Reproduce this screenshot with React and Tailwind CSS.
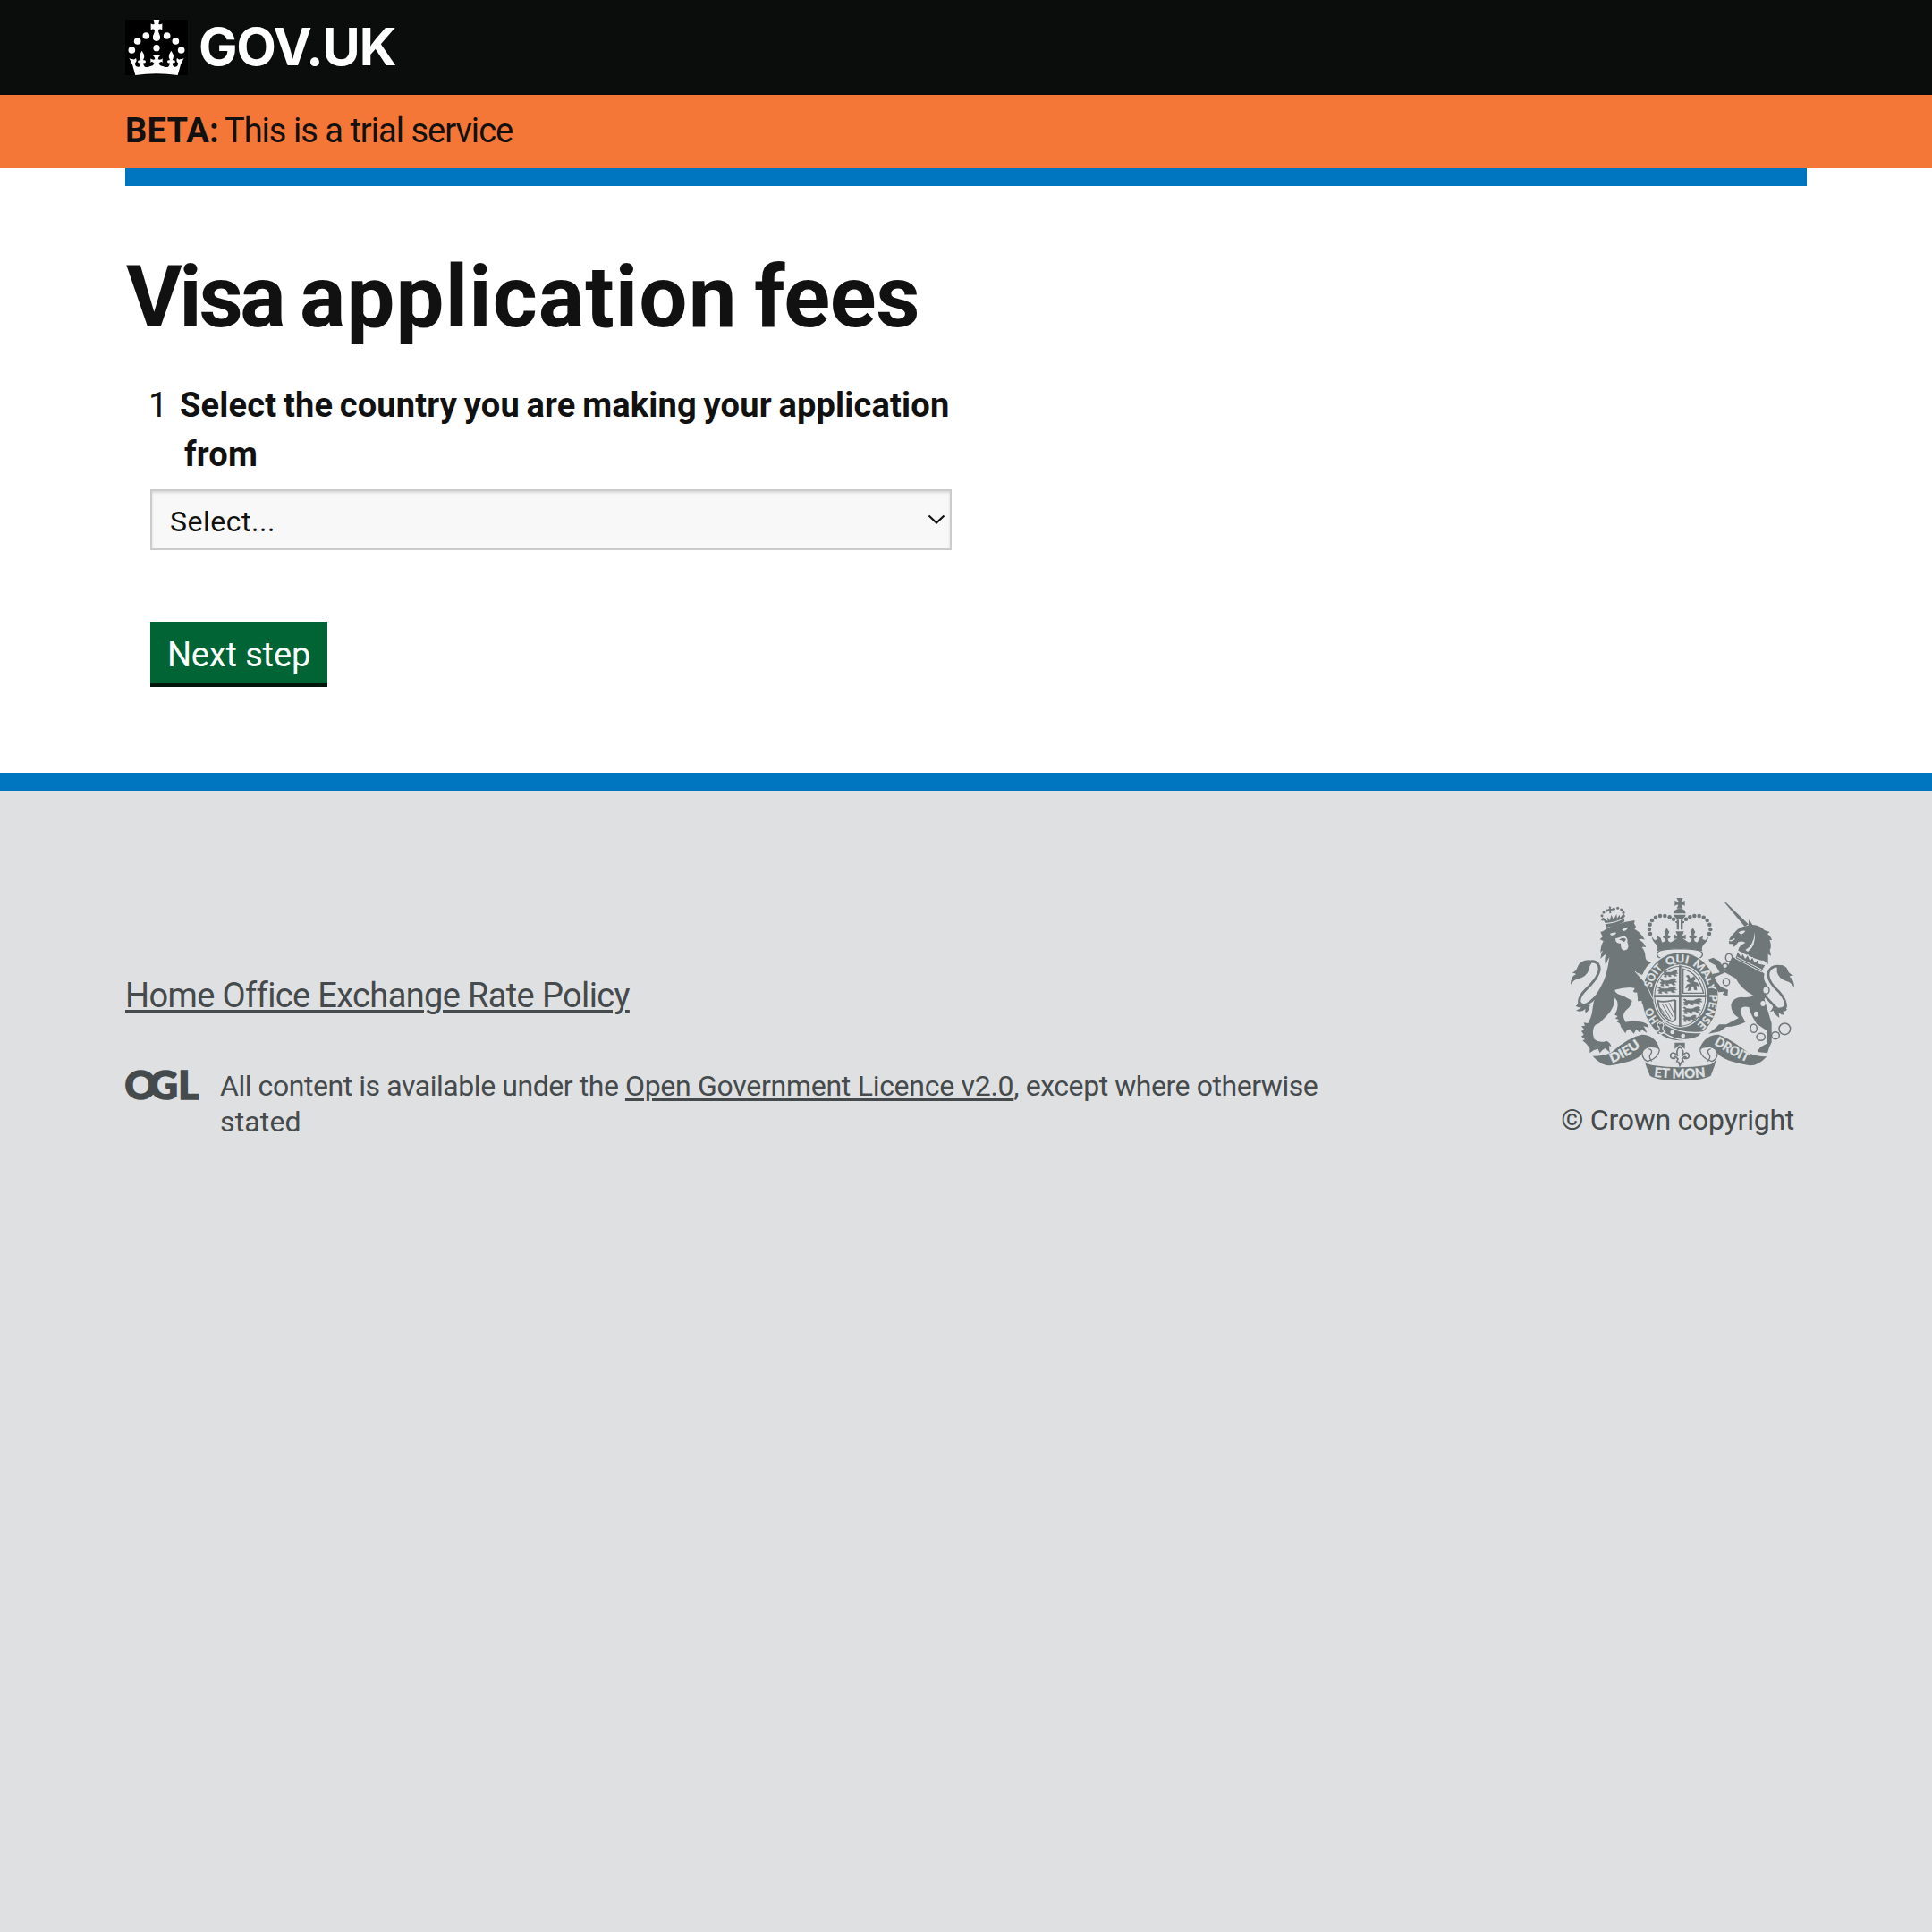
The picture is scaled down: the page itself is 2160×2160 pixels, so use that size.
function CrownLogo() {
  return (
    <svg className="block h-[62px] w-[70px] bg-black" viewBox="30 21 210 186" fill="#fff" aria-hidden="true">
      <path d="M125 21 H145 L142 36 Q150 38 154 34 V55 Q148 50 141 54 Q140 62 147 76 Q149 93 135 93 Q121 93 123 76 Q130 62 129 54 Q122 50 116 55 V34 Q120 38 128 36 Z" />
      <circle cx="135" cy="116" r="11" />
      <circle cx="100" cy="75" r="11.5" />
      <circle cx="170" cy="75" r="11.5" />
      <circle cx="71" cy="93" r="11.5" />
      <circle cx="199" cy="93" r="11.5" />
      <circle cx="52" cy="123" r="11.5" />
      <circle cx="218" cy="123" r="11.5" />
      <path d="M64 207 L54 172 L43 149 Q50 155 55 152 Q57 158 66 150 Q71 160 62 168 Q66 182 76 179 Q83 175 81 165 Q76 169 72 163 Q72 155 82 157 Q76 145 79 138 L86 125 L93 138 Q96 146 90 157 Q100 155 99 163 Q95 169 91 165 Q90 175 96 179 Q106 181 112 178 Q124 176 128 169 Q120 158 115 165 V151 Q120 157 130 154 Q130 147 121 139 H149 Q140 147 140 154 Q150 157 155 151 V165 Q150 158 142 169 Q146 176 158 178 Q166 181 174 179 Q180 175 179 165 Q175 169 171 163 Q170 155 180 157 Q174 146 177 138 L184 125 L191 138 Q194 145 188 157 Q198 155 198 163 Q194 169 189 165 Q187 175 194 179 Q204 182 208 168 Q199 160 204 150 Q213 158 215 152 Q220 155 227 149 L216 172 L206 207 Q135 197 64 207 Z" />
    </svg>
  );
}

function OglLogo() {
  return (
    <svg className="-mx-[2px] -mt-[12px] block h-[60px] w-[86px] shrink-0" viewBox="-2 -14 86 60" fill="#454a4c" role="img" aria-label="OGL">
      <text
        x="-0.6 27 59.3" y="33" fontFamily="Lato, sans-serif" fontWeight="900" fontSize="44"
        stroke="#454a4c" strokeWidth="1.6"
      >
        OGL
      </text>
    </svg>
  );
}

const INK = "#6f7779";
const PAPER = "#dee0e2";

const crownPearls = [
  [345, 162], [342, 147], [344, 131], [351, 117], [363, 107], [378, 102], [394, 102], [410, 106], [423, 113],
  [543, 162], [547, 147], [544, 131], [536, 117], [524, 107], [509, 102], [493, 102], [478, 106], [465, 113],
];

const lionCrownPearls = [
  [185, 114], [183, 101], [189, 90], [199, 84], [223, 79], [236, 76], [248, 81], [255, 91], [256, 102],
];

/* One passant lion of the royal arms, drawn inside a 54 x 24 cell */
const PASSANT =
  "M3 3 Q9 -1 11 6 Q20 8 29 7 L38 2 Q46 -2 50 4 L46 7 L52 11 L44 12 Q42 16 49 19 L41 20 L36 15 L26 16 L29 22 L21 21 L20 16 L12 17 L14 23 L5 22 L8 17 L3 13 L9 10 Z";

function Crest() {
  return (
    <svg className="block h-[204px] w-[250px] overflow-visible" viewBox="78 42 750 612" fill={INK} role="img" aria-label="Royal coat of arms">
      <defs>
        <path id="garter" d="M445 487 A99 114 0 0 1 445 259 A99 114 0 0 1 445 487" />
        <path id="dieu" d="M217 596 Q268 575 318 536" />
        <path id="droit" d="M558 532 Q610 566 668 592" />
        <path id="etmon" d="M357 641 Q444 652 532 641" />
      </defs>

      {/* Lion's tail */}
      <g fill="none" stroke={INK} strokeWidth="9">
        <path d="M116 287 Q122 255 150 254 Q177 256 174 285 Q168 312 130 348 Q98 380 111 398 Q125 410 160 376 Q185 350 200 322" />
      </g>
      <path d="M140 250 Q108 250 100 276 Q98 286 82 294 Q92 292 96 298 Q78 304 78 333 Q86 316 106 312 Q130 306 138 286 Q142 264 152 256 Z" />
      <path d="M104 384 Q104 400 95 404 Q104 411 114 407 Q106 417 96 419 Q116 427 128 413 Q124 425 131 426 Q144 414 142 398 Q124 406 104 384 Z" />

      {/* Lion */}
      <path d="M178 156 Q190 153 199 145 L214 137 L262 122 L293 117 L291 128 L297 138 L292 146 Q312 156 327 182 Q316 177 306 181 Q324 190 331 208 Q322 204 317 207 Q329 222 329 242 Q331 256 352 256 Q334 268 326 284 L318 300 L296 290 L330 328 L345 352 L340 372 L318 384 L304 388 Q302 376 312 370 Q300 372 303 358 Q291 362 287 354 Q294 350 292 344 L278 342 Q252 342 226 350 Q226 358 236 364 Q262 372 284 386 Q282 404 262 420 Q250 434 258 449 L262 458 Q280 454 300 456 Q326 456 337 468 L340 476 L322 472 Q330 480 334 494 L314 482 L312 495 L298 482 L290 497 L277 482 Q264 482 262 496 L246 474 Q246 462 232 456 L240 450 L228 446 L236 438 L226 434 Q240 412 234 388 L226 376 Q226 410 200 436 L174 462 Q156 466 154 482 Q150 500 158 516 Q176 530 198 521 Q214 528 214 542 L208 536 Q206 546 210 560 L194 546 Q184 550 176 562 L170 548 Q154 550 142 562 L142 546 Q132 530 118 520 L126 516 L114 506 L122 500 L114 488 L124 484 L114 472 L126 470 L122 460 L136 462 Q150 440 152 410 Q156 374 178 342 Q200 306 208 240 Q200 250 196 268 Q190 254 196 230 Q182 240 178 246 Q178 232 186 218 Q178 220 180 230 Q174 210 188 186 L176 181 L185 172 Z" />
      <g fill={PAPER}>
        <path d="M209 162 Q220 156 231 158 Q228 168 214 167 Z" />
        <path d="M250 148 Q260 140 270 140 Q268 150 256 153 Z" />
        <path d="M228 178 L242 174 L258 168 Q272 178 268 190 Q276 208 266 215 Q252 222 247 208 L246 194 Q236 196 230 188 Z" />
      </g>
      <path d="M240 182 Q252 172 264 180 L258 190 L248 184 Z" />

      {/* Lion's crown */}
      <path d="M194 130 Q224 128 257 112 L259 121 Q232 137 198 141 Z" />
      <path d="M194 126 L183 106 L194 112 L202 120 L202 106 L210 118 L214 98 L222 114 L232 96 L234 110 L242 98 L244 108 L257 92 L257 109 Q228 124 194 126 Z" />
      <path d="M206 70 L214 72 L212 78 L219 77 L218 85 L213 83 L214 93 L208 94 L208 84 L202 86 L202 79 L208 79 Z" />
      {lionCrownPearls.map(([cx, cy]) => (
        <circle key={`${cx}-${cy}`} cx={cx} cy={cy} r="4.6" />
      ))}

      {/* Central crown */}
      <path d="M433 42 H455 L449 54 Q457 55 461 50 V69 Q456 63 449 65 L454 77 H434 L439 65 Q432 63 427 69 V50 Q432 55 440 54 Z" />
      <path d="M424 94 Q426 78 444 77 Q462 78 464 94 Z M424 98 H464 Q460 113 444 113 Q428 113 424 98 Z" />
      <path d="M434 115 H441 V148 H434 Z M447 115 H454 V148 H447 Z M430 120 H434 V126 H430 Z M454 120 H459 V126 H454 Z" />
      {crownPearls.map(([cx, cy]) => (
        <circle key={`${cx}-${cy}`} cx={cx} cy={cy} r="6.8" />
      ))}
      <path d="M350 172 L360 184 L370 180 L368 168 L380 176 L384 190 Q396 192 396 178 Q388 178 387 170 L397 166 L392 156 L400 142 L409 156 L404 166 L413 170 Q412 178 404 178 Q404 192 416 190 L436 176 L424 180 L426 164 L437 170 L430 154 H458 L452 170 L464 164 L464 180 L452 176 L472 190 Q484 192 484 178 Q476 178 475 170 L484 166 L479 156 L488 142 L496 156 L491 166 L501 170 Q500 178 492 178 Q492 192 504 190 L510 176 L522 168 L520 180 L530 184 L540 172 Q538 188 522 200 L517 213 Q444 196 371 213 L367 200 Q352 188 350 172 Z" />
      <path d="M371 208 Q444 192 517 208 L520 220 Q444 202 368 220 Z" />
      <path d="M368 226 Q376 213 444 212 Q512 213 520 226 Q522 240 508 244 Q444 216 380 244 Q366 240 368 226 Z" fill={PAPER} stroke={INK} strokeWidth="4" />

      {/* Garter */}
      <ellipse cx="445" cy="373" rx="131" ry="151" fill={PAPER} />
      <ellipse cx="445" cy="373" rx="127" ry="147" />
      <ellipse cx="445" cy="371" rx="91" ry="106" fill={PAPER} />
      <ellipse cx="445" cy="371" rx="87" ry="102" fill={INK} />
      <ellipse cx="445" cy="371" rx="84" ry="99" fill={PAPER} />

      {/* Quartered shield */}
      <path d="M441 268 H449 V367 H532 V375 H449 V474 H441 V375 H358 V367 H441 Z" />
      <g stroke={INK} strokeWidth="1.5">
        <path d={PASSANT} transform="translate(386 284)" />
        <path d={PASSANT} transform="translate(374 311) scale(1.15)" />
        <path d={PASSANT} transform="translate(366 339) scale(1.3 1)" />
        <path d={PASSANT} transform="translate(452 379) scale(1.3 1)" />
        <path d={PASSANT} transform="translate(452 406) scale(1.2 1.05)" />
        <path d={PASSANT} transform="translate(452 434) scale(.95 1)" />
      </g>
      <path d="M455 280 Q506 292 524 361 H455 Z" fill="none" stroke={INK} strokeWidth="4" />
      <path d="M464 302 L474 300 L480 312 L492 304 L498 314 L490 322 L504 326 L510 340 L500 336 L502 352 L492 350 L490 338 L480 340 L482 352 L470 354 L474 342 L462 346 L468 332 L480 328 L466 320 L474 314 Z" />
      <path d="M370 386 Q386 394 426 384 L430 448 Q420 462 410 452 Q376 436 370 386 Z M430 384 V450" fill="none" stroke={INK} strokeWidth="5" />
      <path d="M384 396 L414 448 M396 396 L420 440 M408 394 L425 428 M378 410 L404 444" fill="none" stroke={INK} strokeWidth="3" />

      {/* Lion's forepaw resting on the garter */}
      <path d="M294 288 L326 326 L340 352 L352 378 L350 400 L342 386 L334 400 L326 388 L318 400 L316 386 L304 388 L300 350 L290 330 Z" />
      <path d="M294 288 L326 324 L341 352 L353 380" fill="none" stroke={PAPER} strokeWidth="3" />

      {/* Garter strap, motto and buckle */}
      <path d="M466 482 Q500 462 514 436 L560 430 Q530 484 490 500 Z" />
      <g fill={PAPER} stroke={PAPER} strokeWidth="0.6" fontFamily="Lato, sans-serif" fontWeight="900" fontSize="37">
        <text><textPath href="#garter" startOffset="80" textLength="52" lengthAdjust="spacingAndGlyphs">HO</textPath></text>
        <text><textPath href="#garter" startOffset="197" textLength="76" lengthAdjust="spacingAndGlyphs">SOIT</textPath></text>
        <text><textPath href="#garter" startOffset="289" textLength="72" lengthAdjust="spacingAndGlyphs">QUI</textPath></text>
        <text><textPath href="#garter" startOffset="376" textLength="108" lengthAdjust="spacingAndGlyphs">MALY</textPath></text>
        <text><textPath href="#garter" startOffset="494" textLength="114" lengthAdjust="spacingAndGlyphs">PENSE</textPath></text>
      </g>
      <path d="M370 462 Q388 446 396 466 Q450 500 520 492 L508 506 Q450 534 390 494 Q366 508 366 490 Q380 488 374 474 Q366 474 370 462 Z" stroke={PAPER} strokeWidth="4" />
      <path d="M376 464 Q390 456 390 470 Q382 480 394 490 Q382 500 374 492" fill="none" stroke={PAPER} strokeWidth="4" />
      <circle cx="419" cy="492" r="7" fill={PAPER} />
      <circle cx="455" cy="504" r="7" fill={PAPER} />

      {/* Unicorn's tail */}
      <path d="M788 272 Q752 264 742 290 Q736 312 760 340 Q800 376 800 404 Q796 424 776 418 Q756 400 730 370" fill="none" stroke={INK} strokeWidth="8" />
      <path d="M770 268 Q800 264 806 284 Q810 296 828 302 Q814 300 812 306 Q828 314 828 344 Q820 324 800 320 Q776 312 770 290 Z" />
      <path d="M756 402 Q776 420 800 400 Q796 412 804 416 Q798 424 790 420 L794 434 Q782 434 776 426 L778 444 Q760 430 758 420 L746 424 Q758 412 756 402 Z" />

      {/* Unicorn */}
      <path d="M594 57 L600 58 L674 130 L662 138 Z" />
      <path d="M676 114 L688 132 Q714 134 728 150 L746 156 L738 162 Q752 174 753 184 L745 182 Q754 204 746 216 L750 236 L740 230 L740 264 L726 252 Q700 250 640 218 Q640 204 664 192 Q656 184 640 190 Q634 200 626 206 L620 196 L610 196 Q606 186 612 176 Q632 150 648 140 L674 134 Z" />
      <path d="M640 158 Q650 150 664 152 Q660 162 650 164 L644 160 Z" fill={PAPER} />
      <path d="M664 216 Q692 202 696 156 Q700 204 672 222 Z" fill={PAPER} />
      <path d="M610 184 Q620 188 628 178" stroke={PAPER} strokeWidth="4" fill="none" />
      <path d="M620 240 L634 244 L718 288 L728 296 Q722 312 734 330 Q742 352 728 382 Q742 430 752 462 L752 526 Q744 540 738 562 L704 558 L714 542 L736 530 L738 488 L702 464 Q680 430 676 408 Q644 400 648 428 L664 458 Q630 474 600 474 L578 490 L540 497 L564 478 L576 466 L600 466 L642 444 Q616 430 616 400 Q622 376 650 374 Q676 378 692 370 Q648 346 632 312 L596 292 L560 308 L568 324 L582 340 L606 350 L604 370 L588 366 L592 356 L574 358 L566 344 L548 312 L556 296 L578 292 L564 268 L546 258 L540 248 L556 242 L578 254 L594 282 L606 268 Z" />
      <path d="M638 220 L650 238 L654 226 L664 244 L672 232 L680 250 L688 240 L696 258 L706 248 L710 262 L732 266 L718 290 L630 244 Z" fill={INK} stroke={PAPER} strokeWidth="3" />
      <path d="M636 240 L718 282" stroke={PAPER} strokeWidth="3" />

      {/* Unicorn's chain */}
      <g fill="none" stroke={INK} strokeWidth="4.5">
        <ellipse cx="609" cy="242" rx="11" ry="13" />
        <ellipse cx="596" cy="270" rx="9" ry="8" />
        <ellipse cx="733" cy="351" rx="11" ry="13" fill={PAPER} />
        <ellipse cx="692" cy="479" rx="11" ry="14" />
        <ellipse cx="716" cy="508" rx="14" ry="12" />
        <ellipse cx="765" cy="503" rx="13" ry="12" />
        <circle cx="796" cy="481" r="19" />
      </g>
      <ellipse cx="600" cy="324" rx="11" ry="12" fill={PAPER} stroke={INK} strokeWidth="4" />
      <ellipse cx="723" cy="396" rx="8" ry="9" fill={PAPER} />
      <ellipse cx="700" cy="431" rx="7" ry="9" fill={PAPER} />

      {/* Fleur-de-lis under the garter */}
      <path d="M427 527 H461 V548 L444 534 L427 548 Z" />
      <path d="M444 540 Q428 556 438 572 Q420 552 413 568 Q412 582 426 580 Q422 574 430 574 L438 582 L434 590 L440 592 L444 604 L450 592 L456 590 L452 582 L460 574 Q468 574 462 580 Q476 582 475 568 Q468 552 452 572 Q462 556 444 540 Z" fill={PAPER} stroke={INK} strokeWidth="5" />

      {/* Ribbon with the lower motto */}
      <path d="M152 572 Q190 572 214 560 Q270 510 316 500 Q362 500 376 548 L352 542 Q330 536 318 562 Q306 590 210 604 Q180 604 152 572 Z" />
      <path d="M736 574 Q700 574 676 562 Q610 512 574 500 Q528 500 510 548 L536 542 Q558 538 570 562 Q590 590 680 604 Q708 604 736 574 Z" />
      <path d="M318 562 Q320 546 342 541 Q374 540 376 552 Q372 580 336 590 Q318 582 318 562 Z" fill={PAPER} stroke={INK} strokeWidth="4" />
      <path d="M570 562 Q568 546 546 541 Q514 540 512 552 Q516 580 552 590 Q570 582 570 562 Z" fill={PAPER} stroke={INK} strokeWidth="4" />
      <path d="M340 548 Q356 552 346 566 Q338 574 350 590" fill="none" stroke={INK} strokeWidth="4" />
      <path d="M548 548 Q532 552 542 566 Q550 574 538 590" fill="none" stroke={INK} strokeWidth="4" />
      <path d="M320 570 Q322 590 334 598 Q344 602 354 603 Q444 617 534 603 Q550 601 558 594 Q568 584 570 570 Q562 606 548 638 Q520 654 444 654 Q368 654 344 638 Q330 606 320 570 Z" />
      <g fill={PAPER} stroke={PAPER} strokeWidth="0.8" fontFamily="Lato, sans-serif" fontWeight="900" fontSize="44">
        <text><textPath href="#dieu" textLength="112" lengthAdjust="spacingAndGlyphs">DIEU</textPath></text>
        <text><textPath href="#droit" textLength="126" lengthAdjust="spacingAndGlyphs">DROIT</textPath></text>
        <text><textPath href="#etmon" textLength="174" lengthAdjust="spacingAndGlyphs">ET MON</textPath></text>
      </g>
    </svg>
  );
}

export default function App() {
  return (
    <div className="flex min-h-[2160px] flex-col bg-white font-['Roboto',sans-serif] text-[#111]">
      <header className="h-[106px] bg-[#0b0c0c] px-[140px]">
        <a href="#" className="flex h-full items-center gap-3">
          <CrownLogo />
          <span className="pb-[2px] font-['Inter',sans-serif] text-[58px] leading-[104px] font-bold tracking-[-0.02em] whitespace-nowrap text-white">
            GOV.UK
          </span>
        </a>
      </header>

      <div className="h-[82px] bg-[#f47738] px-[140px] text-[38px] leading-[80px] whitespace-nowrap">
        <strong className="font-bold tracking-[0.006em]">BETA:</strong>
        <span className="ml-[6px] tracking-[-0.0258em]">This is a trial service</span>
      </div>

      <main className="px-[140px]">
        <div className="h-5 bg-[#0076c0]" />
        <h1 className="mt-[74px] ml-px text-[96px] leading-[100px] font-bold [word-spacing:-0.055em] whitespace-nowrap">
          <span className="tracking-[-0.035em]">Visa</span> <span className="tracking-[0.0115em]">application</span>{" "}
          <span className="tracking-[-0.003em]">fees</span>
        </h1>
        <form className="mt-[44px] ml-[28px] flex w-[896px] flex-col items-start">
          <div className="flex text-[38px] leading-[55px] whitespace-nowrap">
            <span className="w-[38px] shrink-0">
              <span className="-ml-[2px]">1</span>
            </span>
            <label htmlFor="country" className="-indent-[5px] font-bold tracking-[0.0045em] [word-spacing:-0.05em]">
              Select the country you are making your application
              <br />
              from
            </label>
          </div>
          <div
            id="country"
            className="mt-[11px] flex h-[68px] w-full items-center justify-between border-2 border-[#cbcbcb] bg-[#f8f8f8] pr-[5px] pl-5 shadow-[inset_0_2px_3px_rgba(0,0,0,0.12)]"
          >
            <span className="pt-1 text-[32px] leading-none tracking-[0.0164em]">Select...</span>
            <svg className="h-[12px] w-[20px]" viewBox="0 0 20 12" fill="none" stroke="#111" strokeWidth="2.2">
              <path d="M1.5 1.5 L10 9.5 L18.5 1.5" />
            </svg>
          </div>
          <button
            type="button"
            className="mt-20 h-[73px] w-[198px] border-b-4 border-[#00160b] bg-[#006435] pt-[3px] text-[38px] leading-[68px] tracking-[-0.0038em] whitespace-nowrap text-white"
          >
            Next step
          </button>
        </form>
      </main>

      <footer className="mt-24 flex grow items-start justify-between border-t-20 border-[#0076c0] bg-[#dee0e2] pr-[154px] pl-[140px] text-[#454a4c]">
        <div className="mt-[204px] whitespace-nowrap">
          <a
            href="#"
            className="block text-[38px] leading-[50px] tracking-[-0.0168em] underline decoration-3 underline-offset-[3px]"
          >
            Home Office Exchange Rate Policy
          </a>
          <div className="mt-[56px] flex items-start gap-6">
            <OglLogo />
            <p className="text-[32px] leading-10 tracking-[-0.0138em]">
              All content is available under the{" "}
              <a href="#" className="tracking-[-0.0088em] underline decoration-3 underline-offset-[3px]">
                Open Government Licence v2.0
              </a>
              , except where otherwise
              <br />
              <span className="tracking-[0.0042em]">stated</span>
            </p>
          </div>
        </div>
        <div className="mt-[120px] flex flex-col items-end">
          <Crest />
          <p className="mt-6 text-[32px] leading-10 tracking-[-0.0078em] whitespace-nowrap">© Crown copyright</p>
        </div>
      </footer>
    </div>
  );
}
